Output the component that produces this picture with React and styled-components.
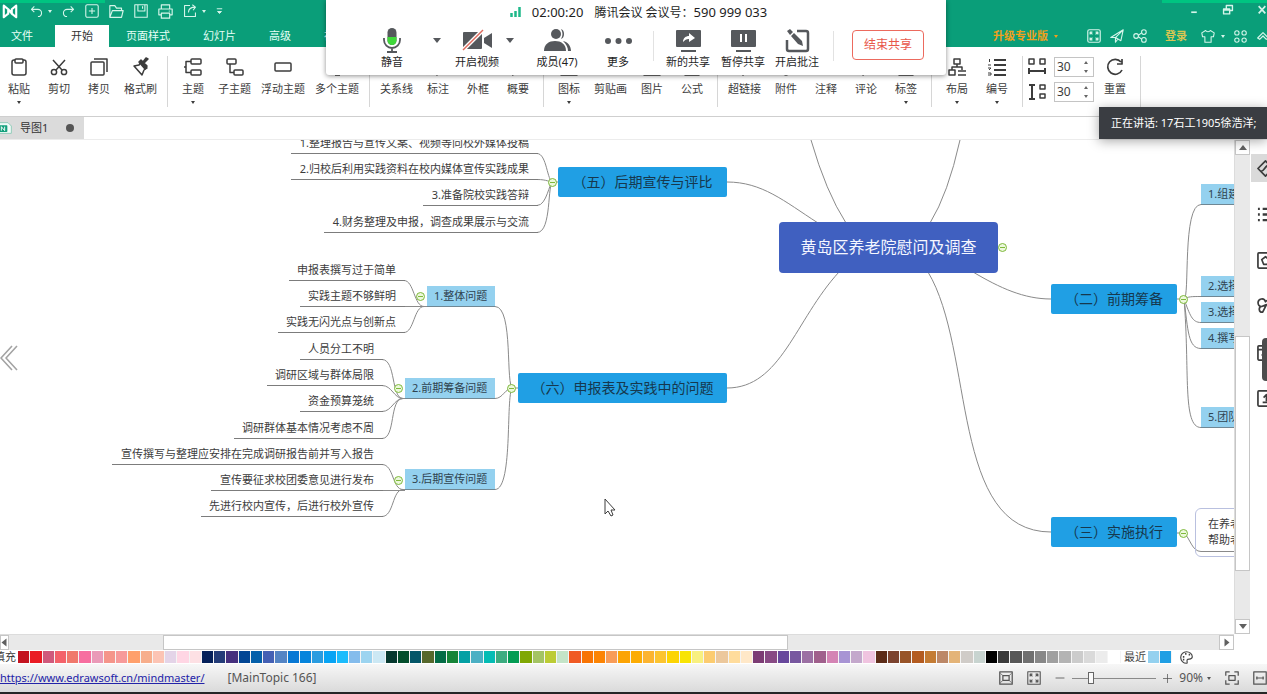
import React from "react";
import styled, { createGlobalStyle, css } from "styled-components";

const GlobalStyle = createGlobalStyle`
  * { box-sizing: border-box; }
  html, body, #root { height: 100%; }
  body {
    margin: 0;
    overflow: hidden;
    background: #fff;
    font-family: "Noto Sans", "Noto Sans CJK SC", sans-serif;
    font-size: 11px;
    line-height: 16px;
    color: #3c3c3c;
  }
  button, input { font: inherit; color: inherit; }
  button { border: 0; padding: 0; background: none; white-space: nowrap; }
`;

const GREEN = "#0a9e79";

const Svg = styled.svg`
  display: block;
  flex: none;
  overflow: visible;
  fill: none;
  stroke: currentColor;
  stroke-width: ${(p) => p.$stroke || 1.5};
  stroke-linejoin: round;
`;

const Icon = ({ size = 18, box = 18, stroke, children }) => (
  <Svg width={size} height={size} viewBox={`0 0 ${box} ${box}`} $stroke={stroke} aria-hidden="true">
    {children}
  </Svg>
);

const Caret = styled.span`
  display: block;
  flex: none;
  width: 0;
  border: ${(p) => p.$size || 2}px solid transparent;
  border-width: ${(p) => (p.$size || 2) + 1}px ${(p) => p.$size || 2}px 0;
  border-top-color: currentColor;
`;

/* ---------- window shell ---------- */

const Window = styled.div`
  position: relative;
  height: 100vh;
  display: flex;
  flex-direction: column;
  overflow: hidden;
`;

const Header = styled.header`
  flex: none;
  background: ${GREEN};
  color: #e6fff6;
`;

const Accent = styled.div`
  display: flex;
  justify-content: space-between;
  height: 3px;
  &::before, &::after { content: ""; width: 105px; background: #00c481; }
`;

const TitleRow = styled.div`
  display: flex;
  justify-content: space-between;
  height: 22px;
`;

const QuickBar = styled.div`
  display: flex;
  align-items: center;
  height: 16px;
  padding-left: 2px;
  gap: 10px;
  > svg { margin-right: 2px; }
`;

const QuickButton = styled.button`
  display: flex;
  align-items: center;
  gap: 5px;
  color: #d5f5ea;
`;

const WindowButtons = styled.div`
  display: flex;
  align-items: center;
  height: 14px;
  gap: 24px;
`;

const TabRow = styled.nav`
  display: flex;
  height: 22px;
`;

const Tab = styled.button`
  height: 22px;
  margin-right: 1px;
  padding: 0 16px;
  line-height: 22px;
  ${(p) => p.$file && css`padding: 0 11px; margin-right: 11px;`}
  ${(p) => p.$active && css`background: #fff; color: #333;`}
`;

const Account = styled.div`
  display: flex;
  align-items: center;
  margin: 0 -2px 0 auto;
  gap: 9px;
`;

const AccountButton = styled.button`
  display: flex;
  align-items: center;
  gap: 6px;
  color: ${(p) => p.$color || "#d5f5ea"};
  font-weight: ${(p) => (p.$color ? 700 : 400)};
  margin-right: ${(p) => p.$after || 0}px;
`;

/* ---------- ribbon ---------- */

const Ribbon = styled.div`
  flex: none;
  display: flex;
  height: 70px;
  margin-left: -1px;
  border-bottom: 1px solid #cfcfcf;
`;

const Group = styled.div`
  display: flex;
  flex: none;
  height: 51px;
  margin-top: 9px;
  padding: 0 5px;
  border-right: 1px solid #d6d6d6;
  &:first-child { padding-left: 0; }
`;

const Tool = styled.button`
  display: flex;
  flex-direction: column;
  align-items: center;
  min-width: 40px;
  padding: 2px 5px 0;
  svg { margin-bottom: 5px; }
  ${Caret} { margin-top: 4px; }
`;

const SpacingGroup = styled.div`
  display: flex;
  flex-direction: column;
  gap: 5px;
  padding: 1px 1px 0 0;
`;

const SpacingRow = styled.label`
  display: flex;
  align-items: center;
  gap: 8px;
`;

const Spinner = styled.span`
  display: flex;
  align-items: center;
  width: 40px;
  height: 20px;
  padding-right: 5px;
  border: 1px solid #c4c4c4;
`;

const SpinnerInput = styled.input`
  width: 100%;
  min-width: 0;
  padding: 0 0 0 2px;
  border: 0;
  outline: 0;
  background: none;
  font-size: 12px;
`;

const SpinnerArrows = styled.span`
  display: flex;
  flex-direction: column;
  gap: 6px;
  color: #666;
  ${Caret}:first-child { transform: rotate(180deg); }
`;

/* ---------- document tabs ---------- */

const DocTabs = styled.div`
  flex: none;
  height: 23px;
  border-bottom: 1px solid #ececec;
`;

const DocTab = styled.button`
  display: flex;
  align-items: center;
  width: 84px;
  height: 22px;
  background: #dbdbdb;
  color: #333;
`;

const DocName = styled.span`
  margin: 0 18px 0 8px;
`;

const Dot = styled.span`
  width: 8px;
  height: 8px;
  border-radius: 50%;
  background: #555;
`;

/* ---------- workspace ---------- */

const Workspace = styled.main`
  flex: 1;
  display: flex;
  min-height: 0;
`;

const CanvasColumn = styled.div`
  flex: 1;
  min-width: 0;
  display: flex;
  flex-direction: column;
`;

const Canvas = styled.div`
  position: relative;
  flex: 1;
  overflow: hidden;
`;

const Lines = styled.svg`
  position: absolute;
  inset: 0;
  width: 100%;
  height: 100%;
  fill: none;
  stroke: #8a8a8a;
`;

const placed = css`
  position: absolute;
  left: ${(p) => p.$x}px;
  top: ${(p) => p.$y}px;
  width: ${(p) => p.$w}px;
  white-space: nowrap;
`;

const Central = styled.div`
  ${placed}
  height: 51px;
  border-radius: 4px;
  background: #4060c0;
  color: #f4f6ff;
  font-size: 16px;
  line-height: 50px;
  text-align: center;
`;

const MainTopic = styled.div`
  ${placed}
  height: 30px;
  border-radius: 2px;
  background: #209fe4;
  color: #16384e;
  font-size: 14px;
  line-height: 30px;
  text-align: center;
`;

const SubTopic = styled.div`
  ${placed}
  height: 21px;
  padding-left: 7px;
  border-bottom: 1px solid #6f8794;
  background: #94d1ef;
  color: #2f4350;
  line-height: 20px;
`;

const Leaf = styled.div`
  ${placed}
  height: 21px;
  padding-right: 9px;
  border-bottom: 1px solid #7c7c7c;
  line-height: 20px;
  text-align: right;
`;

const Callout = styled.div`
  ${placed}
  height: 49px;
  padding: 7px 12px;
  border: 1px solid #b9c0df;
  border-radius: 6px;
`;

const Toggle = styled.button`
  ${placed}
  display: flex;
  align-items: center;
  justify-content: center;
  height: 9px;
  border: 1px solid #7fb93c;
  border-radius: 50%;
  background: #ecf8dc;
  &::before { content: ""; width: 5px; height: 1px; background: #7fb93c; }
`;

const PrevButton = styled.button`
  position: absolute;
  left: 0;
  top: 204px;
  color: #a3a3a3;
`;

const Pointer = styled.div`
  position: absolute;
  left: 604px;
  top: 358px;
`;

const HScroll = styled.div`
  display: flex;
  height: 16px;
  border-top: 1px solid #dcdcdc;
  background: #e9e9e9;
`;

const VScroll = styled.div`
  display: flex;
  flex-direction: column;
  width: 16px;
  margin-bottom: 16px;
  border-left: 1px solid #dcdcdc;
  background: #e9e9e9;
`;

const Track = styled.div`
  flex: ${(p) => p.$part};
`;

const Thumb = styled.div`
  flex: ${(p) => p.$part};
  border: 1px solid #c6c6c6;
  background: #fff;
`;

const ScrollButton = styled.button`
  display: flex;
  flex: none;
  align-items: center;
  justify-content: ${(p) => (p.$cut ? "flex-end" : "center")};
  width: ${(p) => (p.$cut ? 9 : 15)}px;
  height: 15px;
  border: 1px solid #c6c6c6;
  background: #fff;
  color: #606060;
  ${Caret} { transform: rotate(${(p) => p.$turn || 0}deg); }
`;

const SidePanel = styled.aside`
  position: relative;
  flex: none;
  width: 17px;
  padding: 14px 0 0 1px;
  display: flex;
  flex-direction: column;
  gap: 18px;
  overflow: hidden;
`;

const SideButton = styled.button`
  display: flex;
  flex: none;
  align-items: center;
  width: 40px;
  height: 28px;
  padding-left: 6px;
  background: ${(p) => (p.$active ? "#dadada" : "none")};
`;

const SideHandle = styled.div`
  position: absolute;
  right: 0;
  top: 198px;
  width: 5px;
  height: 43px;
  border-radius: 4px 0 0 4px;
  background: #4c4c4c;
`;

/* ---------- palette ---------- */

const Palette = styled.div`
  flex: none;
  display: flex;
  align-items: center;
  height: 14px;
  background: #fff;
`;

const PaletteLabel = styled.span`
  flex: none;
  margin: 0 2px 0 ${(p) => p.$left}px;
`;

const Swatches = styled.div`
  display: flex;
  flex: ${(p) => (p.$fixed ? "none" : 1)};
  width: ${(p) => (p.$fixed ? "24px" : "auto")};
`;

const Swatch = styled.button`
  flex: 1;
  height: 12px;
  border-right: 1px solid #f4f4f4;
  background: ${(p) => p.$color};
`;

const PaletteEnd = styled.div`
  flex: none;
  display: flex;
  align-items: center;
  width: 147px;
  color: #444;
  svg { margin-left: 8px; }
`;

/* ---------- status bar ---------- */

const Status = styled.footer`
  flex: none;
  display: flex;
  align-items: center;
  height: 30px;
  border-bottom: 2px solid #262626;
  background: linear-gradient(#f7f7f7, #dadada);
  color: #555;
  font-size: 12px;
`;

const SiteLink = styled.a`
  margin: 0 23px 0 0;
  color: #2323a8;
  font-size: 11px;
`;

const ViewTools = styled.div`
  display: flex;
  align-items: center;
  margin-left: auto;
  gap: 14px;
`;

const Zoom = styled.div`
  display: flex;
  align-items: center;
  gap: 7px;
`;

const ZoomButton = styled.button`
  display: flex;
  align-items: center;
  gap: 4px;
`;

const Slider = styled.input`
  appearance: none;
  width: 84px;
  height: 14px;
  margin: 0;
  background: linear-gradient(#8a8a8a, #8a8a8a) center / 100% 1px no-repeat;
  &::-webkit-slider-thumb {
    appearance: none;
    width: 6px;
    height: 12px;
    border: 1px solid #666;
    background: #fafafa;
  }
`;

/* ---------- meeting overlay ---------- */

const Meeting = styled.section`
  position: absolute;
  top: 0;
  left: 326px;
  width: 620px;
  height: 75px;
  background: #fff;
  border-radius: 0 0 3px 3px;
  box-shadow: 0 1px 5px rgba(0, 0, 0, 0.45);
  color: #1e1e1e;
`;

const MeetingTitle = styled.div`
  display: flex;
  align-items: center;
  justify-content: center;
  gap: 11px;
  height: 24px;
  padding-left: 5px;
  font-size: 12px;
`;

const MeetingNumber = styled.span`
  font-size: 13px;
`;

const MeetingBar = styled.div`
  display: flex;
  height: 46px;
  padding-left: 41px;
`;

const MeetingButton = styled.button`
  display: flex;
  flex-direction: column;
  align-items: center;
  justify-content: space-between;
  width: 50px;
  margin-left: ${(p) => p.$gap || 0}px;
  padding-top: 4px;
  svg { color: #55585c; }
`;

const MeetingCaret = styled.button`
  display: flex;
  justify-content: center;
  width: 16px;
  height: 24px;
  margin: 0 0 0 ${(p) => p.$gap || 0}px;
  padding-top: 14px;
  color: #55585c;
`;

const MeetingRule = styled.span`
  width: 1px;
  height: 30px;
  margin: 7px 0 0 ${(p) => p.$gap}px;
  background: #e2e2e2;
`;

const EndButton = styled.button`
  width: 72px;
  height: 30px;
  margin: 6px 0 0 18px;
  border: 1px solid #ec6a5e;
  border-radius: 4px;
  color: #e8574a;
  font-size: 12px;
`;

const Speaking = styled.div`
  position: absolute;
  right: 0;
  top: 107px;
  width: 168px;
  height: 32px;
  padding-left: 12px;
  background: #3a3d42;
  box-shadow: 0 2px 12px rgba(0, 0, 0, 0.35);
  color: #fff;
  line-height: 32px;
  white-space: nowrap;
`;

/* ---------- drawings ---------- */

const I = {
  logo: <Icon size={16} stroke={2.4}><path d="M2 16V3l5 4v5zM16 16V3l-5 4v5zM7 7l5 6" stroke="#fff" /></Icon>,
  undo: <Icon size={13} stroke={1.5}><path d="M6 2L2 6l4 4M2 6h9a5 5 0 0 1 5 5c0 3-2 5-5 5" /></Icon>,
  redo: <Icon size={13} stroke={1.5}><path d="M12 2l4 4-4 4M16 6H7a5 5 0 0 0-5 5c0 3 2 5 5 5" /></Icon>,
  add: <Icon size={14} stroke={1.4}><rect x="1" y="1" width="16" height="16" rx="2" /><path d="M9 5v8M5 9h8" /></Icon>,
  open: <Icon size={15} stroke={1.4}><path d="M1 16V2h6l2 3h6v3M1 16l3-8h13l-2 8z" /></Icon>,
  save: <Icon size={14} stroke={1.4}><path d="M1 1h16v16H1zM5 1v8h9V1M11 3v3" /></Icon>,
  print: <Icon size={15} stroke={1.4}><path d="M4 6V1h10v5M4 13H1V6h16v7h-3M4 11h10v6H4zM13 8.500h1" /></Icon>,
  share: <Icon size={14} stroke={1.4}><path d="M9 2H2v14h14v-5M7 11c0-5 4-7 9-7M12 1l4 3-3 4" /></Icon>,
  more: <Icon size={7} stroke={2.5}><path d="M2 2h14M4 9l5 5 5-5z" fill="currentColor" /></Icon>,

  paste: <Icon><rect x="2" y="2" width="14" height="15" rx="2" /><rect x="5" y="1" width="8" height="4" rx="1" fill="#fff" /></Icon>,
  cut: <Icon><circle cx="4" cy="14" r="2.600" /><circle cx="14" cy="14" r="2.600" /><path d="M3 2l9 10M15 2L6 12" /></Icon>,
  copy: <Icon><rect x="1" y="4" width="13" height="13" rx="1" /><path d="M4 1h13v13" /></Icon>,
  brush: <Icon><path d="M2 8l5-1 2-3 6 6-3 2-2 5z" /><path d="M7 4l6 7 2-3-3-3 4-4-2-1-3 4-2-2z" fill="currentColor" /></Icon>,
  topic: <Icon><rect x="7" y="1" width="10" height="5" rx="1" /><rect x="7" y="12" width="10" height="5" rx="1" /><path d="M7 3.500H2v11h5M0 9h2" /></Icon>,
  subtopic: <Icon><rect x="1" y="1" width="9" height="5" rx="1" /><rect x="8" y="12" width="9" height="5" rx="1" /><path d="M4 6v8.500h4" /></Icon>,
  floating: <Icon><rect x="1" y="5" width="16" height="8" rx="1" /></Icon>,
  multi: <Icon><rect x="1" y="1" width="16" height="7" rx="1" /><path d="M7 17h5" /></Icon>,
  relation: <Icon><path d="M3 13C3 5 9 3 15 3" /></Icon>,
  callout: <Icon><path d="M1 2h16v10h-7l-2 5-1-5H1z" /></Icon>,
  frame: <Icon><rect x="1" y="2" width="16" height="12" strokeDasharray="3 2" /></Icon>,
  summary: <Icon><path d="M3 1c6 0 2 8 7 8-5 0-1 8-7 8M12 9h5" /></Icon>,
  picture: <Icon><rect x="1" y="2" width="16" height="15" /><path d="M2 14l5-5 4 4 3-2 3 3" /></Icon>,
  clip: <Icon><path d="M9 2l6 9H3zM9 11v6" /></Icon>,
  link: <Icon><path d="M7 11l5-5M8 5l3-3 5 5-3 3M10 13l-3 4-5-5 3-3" /></Icon>,
  attach: <Icon><path d="M5 7v6a4 4 0 0 0 8 0V4a3 3 0 0 0-6 0v8" /></Icon>,
  note: <Icon><path d="M3 2h12v10l-4 4H3zM6 6h6M6 9h6" /></Icon>,
  comment: <Icon><path d="M1 2h16v11H9l-3 4v-4H1z" /></Icon>,
  tag: <Icon><path d="M2 2h14v15H2zM6 6h6" /></Icon>,
  layout: <Icon><rect x="6" y="1" width="6" height="5" /><rect x="1" y="12" width="6" height="5" /><path d="M9 6v3M4 12V9h10v3M10 13h8M10 17h8" /></Icon>,
  numbering: <Icon><path d="M6 2h12M6 7h12M6 12h12M6 17h12" strokeWidth="2.200" /><path d="M1.500 1v3M0 7h3M0 10h3l-2 2M0 15h3v2H0" strokeWidth="1" /></Icon>,
  hspace: <Icon><rect x="1" y="1" width="5" height="5" /><rect x="12" y="1" width="5" height="5" /><path d="M1 10v6M17 10v6M1 13h16" strokeWidth="2" /></Icon>,
  vspace: <Icon><rect x="12" y="2" width="5" height="4" /><rect x="12" y="11" width="5" height="4" /><path d="M1 2h6M1 16h6M4 2v14" strokeWidth="2" /></Icon>,
  reset: <Icon stroke={1.7}><path d="M15 4A7.500 7.500 0 1 0 16 12M16 1v5h-5" /></Icon>,

  fit: <Icon size={14} stroke={1.5}><rect x="1" y="1" width="16" height="16" rx="2" /><path d="M7 7L4 4m0 3V4h3M11 7l3-3m-3 0h3v3M7 11l-3 3m0-3v3h3M11 11l3 3m0-3v3h-3" /></Icon>,
  plane: <Icon size={14} stroke={1.4}><path d="M1 11L17 1l-3 14-7-4zM7 11L17 1M7 11v6l3-4" /></Icon>,
  nodes: <Icon size={14} stroke={1.4}><circle cx="4" cy="9" r="3" /><circle cx="14" cy="4" r="3" /><circle cx="14" cy="14" r="3" /><path d="M7 8l4-3M7 10l4 3" /></Icon>,
  shirt: <Icon size={14} stroke={1.4}><path d="M6 2L1 5l1 5h3v7h8v-7h3l1-5-5-3c-1 2-5 2-6 0z" /></Icon>,
  apps: <Icon size={13} stroke={1.5}><circle cx="4" cy="4" r="3" /><circle cx="14" cy="4" r="3" /><circle cx="4" cy="14" r="3" /><circle cx="14" cy="14" r="3" /></Icon>,
  up: <Icon size={12} stroke={1.8}><path d="M1 12l8-8 8 8-3 2-5-5-5 5z" /></Icon>,
};

const signal = (
  <Svg width="11" height="10" viewBox="0 0 11 10" $stroke={2.5} aria-hidden="true">
    <path d="M1.500 10V6M5.500 10V4M9.500 10V0" stroke="#1fb98a" />
  </Svg>
);

const mic = (
  <Svg width="18" height="25" viewBox="0 0 18 25" aria-hidden="true">
    <rect x="4.500" y="0" width="9" height="17" rx="4.500" fill="currentColor" stroke="none" />
    <path d="M4.500 9h9v3.500a4.500 4.500 0 0 1-9 0z" fill="#3fd93a" stroke="none" />
    <path d="M1 10v2a8 8 0 0 0 16 0v-2M9 20v4M4 24h10" strokeWidth="1.800" />
  </Svg>
);
const video = (
  <Svg width="29" height="25" viewBox="0 0 29 25" aria-hidden="true">
    <rect x="0" y="4" width="19" height="17" rx="1" fill="currentColor" stroke="none" />
    <path d="M21 10l8-5v15l-8-5z" fill="currentColor" stroke="none" />
    <path d="M0 22L20 2" stroke="#fff" strokeWidth="4" />
    <path d="M0 22L20 2" stroke="#e06a5c" strokeWidth="1.500" />
  </Svg>
);
const members = (
  <Svg width="27" height="25" viewBox="0 0 27 25" aria-hidden="true">
    <g fill="currentColor" stroke="none">
      <circle cx="12" cy="6" r="5" />
      <path d="M0 23c0-7 5-10 11-10s11 3 11 10z" />
      <path d="M17 1c4 1 4 9 0 10 2-3 2-7 0-10zM19 13c5 1 8 5 8 10h-3c0-4-2-7-5-10z" />
    </g>
  </Svg>
);
const dots = (
  <Svg width="27" height="25" viewBox="0 0 27 25" aria-hidden="true">
    <g fill="currentColor" stroke="none"><circle cx="3" cy="13" r="3" /><circle cx="13.500" cy="13" r="3" /><circle cx="24" cy="13" r="3" /></g>
  </Svg>
);
const Screen = ({ children }) => (
  <Svg width="25" height="25" viewBox="0 0 25 25" aria-hidden="true">
    <rect x="0" y="2" width="25" height="17" rx="1" fill="currentColor" stroke="none" />
    <path d="M5 23h15" strokeWidth="2" />
    {children}
  </Svg>
);
const annotate = (
  <Svg width="24" height="25" viewBox="0 0 24 25" aria-hidden="true">
    <path d="M12 3h9a2 2 0 0 1 2 2v16a2 2 0 0 1-2 2H4a2 2 0 0 1-2-2V12" strokeWidth="2.500" />
    <path d="M2 3l3-2 3 3-3 3zM6 8l3-3 8 8 1 5-5-2z" fill="currentColor" stroke="none" />
  </Svg>
);

/* ---------- data ---------- */

const ribbonGroups = [
  [["粘贴", "paste", true], ["剪切", "cut"], ["拷贝", "copy"], ["格式刷", "brush"]],
  [["主题", "topic", true], ["子主题", "subtopic"], ["浮动主题", "floating"], ["多个主题", "multi"]],
  [["关系线", "relation"], ["标注", "callout"], ["外框", "frame"], ["概要", "summary"]],
  [["图标", "picture", true], ["剪贴画", "clip"], ["图片", "picture"], ["公式", "tag"]],
  [["超链接", "link"], ["附件", "attach"], ["注释", "note"], ["评论", "comment"], ["标签", "tag", true]],
  [["布局", "layout", true], ["编号", "numbering", true]],
];

const leaves = [
  ["1.整理报告与宣传文案、视频等向校外媒体投稿", 291, -7, 247],
  ["2.归校后利用实践资料在校内媒体宣传实践成果", 291, 19, 247],
  ["3.准备院校实践答辩", 423, 45, 115],
  ["4.财务整理及申报，调查成果展示与交流", 324, 72, 214],
  ["申报表撰写过于简单", 289, 120, 116],
  ["实践主题不够鲜明", 300, 146, 105],
  ["实践无闪光点与创新点", 278, 172, 127],
  ["人员分工不明", 300, 199, 83],
  ["调研区域与群体局限", 267, 225, 116],
  ["资金预算笼统", 300, 251, 83],
  ["调研群体基本情况考虑不周", 234, 278, 149],
  ["宣传撰写与整理应安排在完成调研报告前并写入报告", 112, 304, 271],
  ["宣传要征求校团委意见进行发布", 211, 330, 172],
  ["先进行校内宣传，后进行校外宣传", 201, 356, 182],
];

const subTopics = [
  ["1.整体问题", 427, 146, 68],
  ["2.前期筹备问题", 405, 238, 90],
  ["3.后期宣传问题", 405, 329, 90],
  ["1.组建", 1201, 44, 90],
  ["2.选择", 1201, 136, 90],
  ["3.选择", 1201, 162, 90],
  ["4.撰写", 1201, 188, 90],
  ["5.团队", 1201, 267, 90],
];

const mainTopics = [
  ["（五）后期宣传与评比", 558, 27, 169],
  ["（六）申报表及实践中的问题", 518, 233, 209],
  ["（二）前期筹备", 1051, 144, 126],
  ["（三）实施执行", 1051, 377, 126],
];

const toggles = [[548, 38], [507, 244], [416, 152], [394, 244], [394, 336], [998, 103], [1179, 155], [1179, 389]];

const connectors = [
  "M811 0Q826 52 846 83", "M960 0Q948 54 930 83",
  "M727 42C762 42 784 61 818 83", "M727 248C781 248 795 180 839 132",
  "M973 132C1000 148 1024 159 1051 159", "M928 132C975 210 950 392 1051 392",
  "M537 13.500C547 13.500 547 42 553 42H558", "M537 39.500C547 39.500 549 42 553 42", "M537 65.500C547 65.500 549 42 553 42", "M537 92.500C552 92.500 547 42 553 42",
  "M404 140.500C414 140.500 414 166.500 424 166.500H427", "M404 166.500H427", "M404 192.500C414 192.500 414 166.500 424 166.500",
  "M382 219.500C396 219.500 391 258.500 403 258.500H405", "M382 245.500C392 245.500 394 258.500 403 258.500", "M382 271.500C392 271.500 394 258.500 403 258.500", "M382 298.500C396 298.500 389 258.500 403 258.500",
  "M382 324.500C394 324.500 392 349.500 403 349.500H405", "M382 350.500H405", "M382 376.500C394 376.500 392 349.500 403 349.500",
  "M495 166.500C514 166.500 505 248 513 248H518", "M495 258.500C503 258.500 505 248 513 248", "M495 349.500C514 349.500 505 248 513 248",
  "M1177 159H1184C1190 159 1182 64.500 1201 64.500", "M1184 159C1188 156.500 1192 156.500 1201 156.500", "M1184 159C1190 175 1192 182.500 1201 182.500",
  "M1184 159C1188 190 1188 208.500 1201 208.500", "M1184 159C1190 230 1182 287.500 1201 287.500",
  "M1177 393H1184C1190 398 1192 411.500 1201 411.500H1300",
];

const colors = (
  "c41420 ea1c24 d05a7c f4626a f0786c f76ea0 ea9ab8 f5958a f79a9a ffa06c f7ae8c fcc4b4 e4d4e8 ffd6e4 fde0e4 " +
  "06205a 243c78 46307e 034694 0560aa 4460b4 5484c4 0878d4 0584dc 2a9ce0 08a4f4 1cbcfc 84bcec 9cd4f0 cce8f4 " +
  "06382e 044e2c 045668 56682c 046c46 168438 04a0a4 4cb0c4 04bcb4 3cac80 049c54 80a804 a4c464 bccc34 c4e4c8 " +
  "f05a24 f87404 fc8404 f89c58 fca404 fcac04 fcb430 fcc430 fcd404 f8e404 f8f080 fccc70 ecc89c ffdc9c ffe8c8 " +
  "7c3c74 884a84 68489c 7858a0 9c70a4 a0608c d484b4 a894d4 c4a8cc f0c4e0 " +
  "5c2c18 7c4430 985428 b45c20 c47c34 bc8868 e4b478 d0ccc8 c8d4d0 " +
  "000000 3c3c3c 585858 707070 888888 a0a0a0 b4b4b4 cccccc dadada ececec ffffff"
).split(" ");

const sideIcons = [
  ["样式", <path d="M1 9l8-8 8 8-8 8zM4 12c4 0 4-6 9-7" />],
  ["大纲", <path d="M1 3h2M1 9h2M1 15h2M6 3h12M6 9h12M6 15h12" strokeWidth="2.500" />],
  ["图标", <><rect x="1" y="1" width="16" height="16" rx="1" /><path d="M9 5l4 3-2 5H7L5 8z" /></>],
  ["剪贴画", <path d="M5 9a4 4 0 1 1 4-5 4 4 0 1 1 5 6M5 9l5-2-4 8a3 3 0 1 1-1-6" />],
  ["任务", <><rect x="1" y="2" width="16" height="15" rx="1" /><path d="M1 6h16M5 11l3 3 6-6" /></>],
  ["导出", <><rect x="1" y="1" width="16" height="16" rx="1" /><path d="M6 13h8M10 12V5M7 8l3-3 3 3" /></>],
];

const Spin = ({ label, icon }) => (
  <SpacingRow>
    {icon}
    <Spinner>
      <SpinnerInput aria-label={label} defaultValue="30" />
      <SpinnerArrows><Caret /><Caret /></SpinnerArrows>
    </Spinner>
  </SpacingRow>
);

export default function App() {
  return (
    <Window>
      <GlobalStyle />
      <Header>
        <Accent />
        <TitleRow>
          <QuickBar>
            {I.logo}
            <QuickButton aria-label="撤销">{I.undo}<Caret /></QuickButton>
            <QuickButton aria-label="恢复">{I.redo}</QuickButton>
            <QuickButton aria-label="新建">{I.add}</QuickButton>
            <QuickButton aria-label="打开">{I.open}</QuickButton>
            <QuickButton aria-label="保存">{I.save}</QuickButton>
            <QuickButton aria-label="打印">{I.print}</QuickButton>
            <QuickButton aria-label="导出">{I.share}<Caret /></QuickButton>
            <QuickButton aria-label="更多">{I.more}</QuickButton>
          </QuickBar>
          <WindowButtons>
            <QuickButton aria-label="最小化"><Icon size={10} stroke={3}><path d="M4 13h10" /></Icon></QuickButton>
            <QuickButton aria-label="还原"><Icon size={10} stroke={2.5}><path d="M6 6V1h11v9h-4M1 7h11v9H1zM1 9h11" /></Icon></QuickButton>
            <QuickButton aria-label="关闭"><Icon size={10} stroke={3}><path d="M3 2l12 13M15 2L3 15" /></Icon></QuickButton>
          </WindowButtons>
        </TitleRow>
        <TabRow>
          <Tab $file>文件</Tab>
          <Tab $active>开始</Tab>
          <Tab>页面样式</Tab>
          <Tab>幻灯片</Tab>
          <Tab>高级</Tab>
          <Tab>视图</Tab>
          <Account>
            <AccountButton $color="#f0a01c" $after={20}>升级专业版<Caret /></AccountButton>
            <AccountButton aria-label="全屏">{I.fit}</AccountButton>
            <AccountButton aria-label="发送">{I.plane}</AccountButton>
            <AccountButton aria-label="分享" $after={9}>{I.nodes}</AccountButton>
            <AccountButton $color="#d9c552" $after={5}>登录</AccountButton>
            <AccountButton aria-label="皮肤">{I.shirt}<Caret /></AccountButton>
            <AccountButton aria-label="应用" $after={1}>{I.apps}</AccountButton>
            <AccountButton aria-label="收起">{I.up}</AccountButton>
          </Account>
        </TabRow>
      </Header>

      <Ribbon>
        {ribbonGroups.map((group, i) => (
          <Group key={i}>
            {group.map(([label, icon, menu]) => (
              <Tool key={label}>{I[icon]}{label}{menu && <Caret />}</Tool>
            ))}
          </Group>
        ))}
        <Group>
          <SpacingGroup>
            <Spin label="水平间距" icon={I.hspace} />
            <Spin label="垂直间距" icon={I.vspace} />
          </SpacingGroup>
          <Tool>{I.reset}重置</Tool>
        </Group>
      </Ribbon>

      <DocTabs>
        <DocTab>
          <Icon size={12} stroke={1.4}><path d="M-2 1h14l5 5v11H-2z" fill="#f2fbf8" stroke="#8cc9b6" /><rect x="-2" y="5" width="13" height="10" rx="1" fill="#12a07c" stroke="none" /><path d="M2 13V7l5 6V7" stroke="#fff" /></Icon>
          <DocName>导图1</DocName>
          <Dot />
        </DocTab>
      </DocTabs>

      <Workspace>
        <CanvasColumn>
          <Canvas>
            <Lines aria-hidden="true">
              {connectors.map((d) => <path key={d} d={d} />)}
            </Lines>
            {leaves.map(([text, x, y, w]) => <Leaf key={text} $x={x} $y={y} $w={w}>{text}</Leaf>)}
            {subTopics.map(([text, x, y, w]) => <SubTopic key={text} $x={x} $y={y} $w={w}>{text}</SubTopic>)}
            {mainTopics.map(([text, x, y, w]) => <MainTopic key={text} $x={x} $y={y} $w={w}>{text}</MainTopic>)}
            <Central $x={779} $y={82} $w={219}>黄岛区养老院慰问及调查</Central>
            <Callout $x={1195} $y={368} $w={90}>在养老<br />帮助老</Callout>
            {toggles.map(([x, y]) => <Toggle key={`${x}-${y}`} aria-label="折叠" $x={x} $y={y} $w={9} />)}
            <PrevButton aria-label="上一页">
              <Svg width="18" height="28" viewBox="0 0 18 28" $stroke={1.6}><path d="M12 2L1 14l11 12M17 2L6 14l11 12" /></Svg>
            </PrevButton>
            <Pointer>
              <Svg width="12" height="19" viewBox="0 0 12 19" $stroke={1}><path d="M1 1v15l3-3 3 5 2-1-2-5h4z" fill="#fff" /></Svg>
            </Pointer>
          </Canvas>
          <HScroll>
            <ScrollButton $cut $turn={90} aria-label="向左"><Caret $size={4} /></ScrollButton>
            <Track $part={154} />
            <Thumb $part={624} />
            <Track $part={431} />
            <ScrollButton $turn={-90} aria-label="向右"><Caret $size={4} /></ScrollButton>
          </HScroll>
        </CanvasColumn>
        <VScroll>
          <ScrollButton $turn={180} aria-label="向上"><Caret $size={4} /></ScrollButton>
          <Track $part={181} />
          <Thumb $part={234} />
          <Track $part={48} />
          <ScrollButton aria-label="向下"><Caret $size={4} /></ScrollButton>
        </VScroll>
        <SidePanel>
          {sideIcons.map(([label, drawing], i) => (
            <SideButton key={label} aria-label={label} $active={i === 0}>
              <Icon size={17} stroke={1.8}>{drawing}</Icon>
            </SideButton>
          ))}
          <SideHandle />
        </SidePanel>
      </Workspace>

      <Palette>
        <PaletteLabel $left={-6}>填充</PaletteLabel>
        <Swatches>
          {colors.map((c) => <Swatch key={c} aria-label={`#${c}`} $color={`#${c}`} />)}
        </Swatches>
        <PaletteEnd>
          <PaletteLabel $left={4}>最近</PaletteLabel>
          <Swatches $fixed>
            <Swatch aria-label="浅蓝" $color="#94d1ef" />
            <Swatch aria-label="蓝" $color="#209fe4" />
          </Swatches>
          <Icon size={13} stroke={1.6}><path d="M9 1a8 8 0 1 0 0 16c2 0 0-3 1-5s7 1 7-4c0-4-4-7-8-7z" /><path d="M4 8h2M7 4h2M12 5h2M4 12h2" strokeWidth="2.500" /></Icon>
        </PaletteEnd>
      </Palette>

      <Status>
        <SiteLink href="https://www.edrawsoft.cn/mindmaster/">https://www.edrawsoft.cn/mindmaster/</SiteLink>
        <span>[MainTopic 166]</span>
        <ViewTools>
          <ZoomButton aria-label="适合页面"><Icon size={14} stroke={1.6}><rect x="1" y="1" width="16" height="16" /><rect x="5" y="6" width="8" height="6" /><path d="M2 3l3 3M16 3l-3 3M2 15l3-3M16 15l-3-3" strokeWidth="1" /></Icon></ZoomButton>
          <ZoomButton aria-label="全屏显示"><Icon size={14} stroke={1.4}><rect x="1" y="1" width="16" height="16" /><path d="M4 7V4h3M11 4h3v3M14 11v3h-3M7 14H4v-3M4 4l3 3M14 4l-3 3M4 14l3-3M14 14l-3-3" /></Icon></ZoomButton>
          <Zoom>
            <ZoomButton aria-label="缩小"><Icon size={10}><path d="M1 9h16" /></Icon></ZoomButton>
            <Slider type="range" aria-label="缩放" min="0" max="400" defaultValue="82" />
            <ZoomButton aria-label="放大"><Icon size={9}><path d="M0 9h18M9 0v18" /></Icon></ZoomButton>
            <ZoomButton>90%<Caret /></ZoomButton>
          </Zoom>
          <ZoomButton aria-label="居中"><Icon size={14} stroke={1.6}><path d="M1 6V1h5M12 1h5v5M17 12v5h-5M6 17H1v-5" /><rect x="5" y="6" width="8" height="6" /></Icon></ZoomButton>
          <ZoomButton aria-label="适合宽度"><Icon size={14} stroke={1.6}><rect x="1" y="1" width="16" height="16" /><path d="M4 9h10M5 7v4M13 7v4" /></Icon></ZoomButton>
        </ViewTools>
      </Status>

      <Meeting>
        <MeetingTitle>
          {signal}
          <MeetingNumber>02:00:20</MeetingNumber>
          <span>腾讯会议 会议号：<MeetingNumber>590 999 033</MeetingNumber></span>
        </MeetingTitle>
        <MeetingBar>
          <MeetingButton>{mic}静音</MeetingButton>
          <MeetingCaret $gap={12} aria-label="音频选项"><Caret $size={4} /></MeetingCaret>
          <MeetingButton $gap={7}>{video}开启视频</MeetingButton>
          <MeetingCaret aria-label="视频选项"><Caret $size={4} /></MeetingCaret>
          <MeetingButton $gap={14}>{members}成员(47)</MeetingButton>
          <MeetingButton $gap={11}>{dots}更多</MeetingButton>
          <MeetingRule $gap={10} />
          <MeetingButton $gap={9}><Screen><path d="M7 14c0-4 3-6 6-6V5l6 5-6 4v-3c-3 0-4 1-6 3z" fill="#fff" stroke="none" /></Screen>新的共享</MeetingButton>
          <MeetingButton $gap={5}><Screen><path d="M10 6v8M15 6v8" stroke="#fff" strokeWidth="2" /></Screen>暂停共享</MeetingButton>
          <MeetingButton $gap={4}>{annotate}开启批注</MeetingButton>
          <MeetingRule $gap={11} />
          <EndButton>结束共享</EndButton>
        </MeetingBar>
      </Meeting>

      <Speaking role="status">正在讲话: 17石工1905徐浩洋;</Speaking>
    </Window>
  );
}
